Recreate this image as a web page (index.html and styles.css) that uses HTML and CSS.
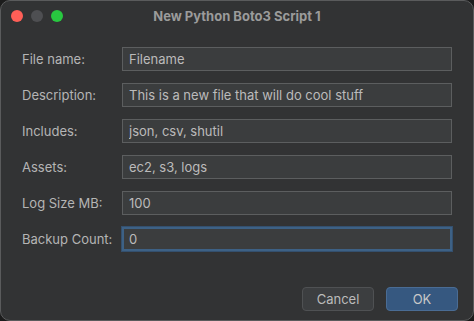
FILE: index.html
```
<!DOCTYPE html>
<html lang="en">
<head>
  <meta charset="UTF-8" />
  <title>New Python Boto3 Script 1</title>
  <link rel="stylesheet" href="styles.css">
</head>
<body>
  <div class="window">
    <div class="titlebar">
      <div class="lights">
        <span class="light close"></span>
        <span class="light mini"></span>
        <span class="light zoom"></span>
      </div>
      <div class="title">New Python Boto3 Script 1</div>
    </div>

    <div class="form">
      <label class="label" for="fileName">File name:</label>
      <input class="field" id="fileName" type="text" value="Filename">

      <label class="label" for="description">Description:</label>
      <input class="field" id="description" type="text" value="This is a new file that will do cool stuff">

      <label class="label" for="includes">Includes:</label>
      <input class="field" id="includes" type="text" value="json, csv, shutil">

      <label class="label" for="assets">Assets:</label>
      <input class="field" id="assets" type="text" value="ec2, s3, logs">

      <label class="label" for="logSize">Log Size MB:</label>
      <input class="field" id="logSize" type="text" value="100">

      <label class="label" for="backupCount">Backup Count:</label>
      <input class="field focused" id="backupCount" type="text" value="0">
    </div>

    <div class="footer">
      <button class="btn">Cancel</button>
      <button class="btn primary">OK</button>
    </div>
  </div>
</body>
</html>
```

FILE: styles.css
```
* {
  box-sizing: border-box;
}
body {
  margin: 0;
  background: #1c1c1c;
  font-family: Inter, 'Liberation Sans', Arial, sans-serif;
  font-size: 13px;
  color: #bbbbbb;
}
.window {
  width: 474px;
  height: 321px;
  display: flex;
  flex-direction: column;
  background: #323334;
  border: 1px solid #5a5b5c;
  border-radius: 10px;
  overflow: hidden;
}
.titlebar {
  height: 29px;
  flex-shrink: 0;
  display: flex;
  align-items: center;
  position: relative;
}
.lights {
  display: flex;
  gap: 8px;
  padding-left: 10px;
}
.light {
  width: 12px;
  height: 12px;
  border-radius: 50%;
}
.light.close {
  background: #fe5f57;
}
.light.mini {
  background: #4e4f52;
}
.light.zoom {
  background: #28c840;
}
.title {
  position: absolute;
  left: 0;
  right: 0;
  top: 7px;
  text-align: center;
  font-weight: bold;
  color: #9b9b9b;
}
.form {
  display: grid;
  grid-template-columns: 100px 1fr;
  row-gap: 12px;
  align-items: center;
  padding: 17px 21px 0 21px;
}
.label {
  color: #b5b5b5;
}
.field {
  height: 24px;
  width: 100%;
  padding: 0 6px;
  font: inherit;
  color: #bbbbbb;
  background: #3b3d3e;
  border: 1px solid #5c5e5f;
  outline: none;
}
.field.focused {
  border: 2px solid #3d6185;
  padding: 0 5px;
  box-shadow: 0 0 0 1px #34506e;
}
.footer {
  margin-top: auto;
  display: flex;
  justify-content: flex-end;
  gap: 12px;
  padding: 0 15px 9px 0;
}
.btn {
  width: 72px;
  height: 24px;
  font: inherit;
  color: #bbbbbb;
  background: #3c3e40;
  border: 1px solid #4f5153;
  border-radius: 4px;
}
.btn.primary {
  background: #365880;
  border-color: #4a6c94;
  color: #c8c8c8;
}
```
